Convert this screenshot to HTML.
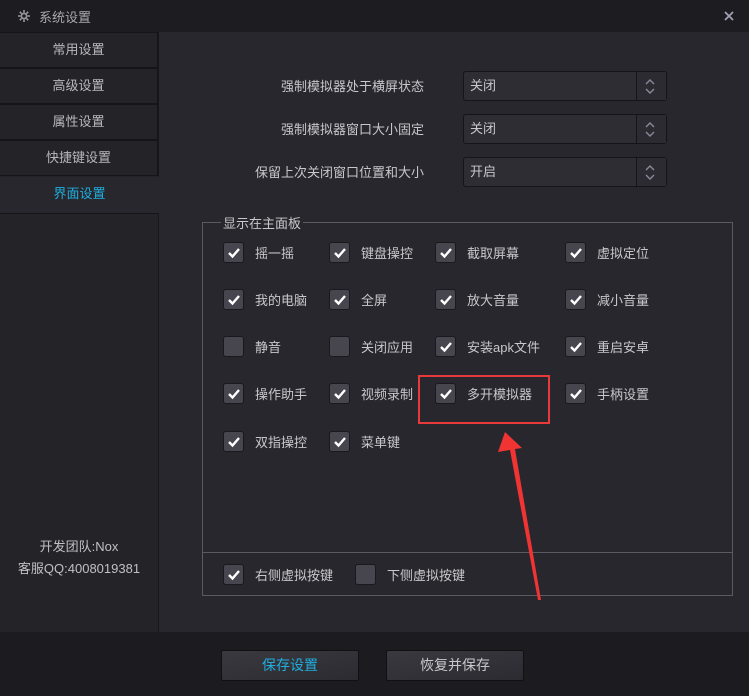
<!DOCTYPE html><html><head><meta charset="utf-8"><style>
*{margin:0;padding:0;box-sizing:border-box}
body{width:749px;height:696px;background:#28272d;font-family:"Liberation Sans","Noto Sans CJK SC",sans-serif;font-size:13px;color:#c8c8cc;position:relative;overflow:hidden}
.a{position:absolute}
.title{left:0;top:0;width:749px;height:32px;background:#1d1c21}
.side{left:0;top:32px;width:159px;height:600px;background:#242328}
.it{left:0;width:158px;height:36px;border:1px solid #151418;border-left:none;background:#242328;text-align:center;line-height:34px;color:#b8b8bc}
.bot{left:0;top:632px;width:749px;height:64px;background:#1c1b20}
.btn{top:650px;width:138px;height:31px;border:1px solid #111;border-radius:2px;background:linear-gradient(170deg,#3a393f,#2c2b31);text-align:center;line-height:29px;font-size:14px}
.sel{left:463px;width:204px;height:30px;border:1px solid #151418;border-radius:3px;background:#2e2d33;line-height:28px;padding-left:6px}
.sel i{position:absolute;right:0;top:0;width:30px;height:28px;border-left:1px solid #151418;background:#2c2b31}
.lab{width:250px;text-align:right;left:174px}
.cb{width:21px;height:21px;background:#47464e;border:1px solid #1a191d;border-radius:3px}
.cb svg{position:absolute;left:3px;top:4px}
.t{font-size:13px}
</style></head><body>
<div class="a title"></div>
<svg class="a" style="left:18px;top:10px" width="12" height="12"><g stroke="#9a9aa0" stroke-width="1.6" fill="none"><circle cx="6" cy="6" r="2.6"/><path d="M6 0v2.5M6 9.5V12M0 6h2.5M9.5 6H12M1.8 1.8l1.8 1.8M8.4 8.4l1.8 1.8M1.8 10.2l1.8-1.8M8.4 3.6l1.8-1.8"/></g></svg>
<div class="a" style="left:39px;top:7px;color:#a8a8ae">系统设置</div>
<svg class="a" style="left:724px;top:11px" width="10" height="10"><path d="M1 1l8 8M9 1L1 9" stroke="#a0a0b0" stroke-width="1.8"/></svg>
<div class="a side"></div>
<div class="a" style="left:158px;top:32px;width:1px;height:600px;background:#18171b"></div>
<div class="a it" style="top:32px">常用设置</div>
<div class="a it" style="top:68px">高级设置</div>
<div class="a it" style="top:104px">属性设置</div>
<div class="a it" style="top:140px">快捷键设置</div>
<div class="a it" style="top:177px;border:none;background:#28272d;color:#1eaee0;width:159px">界面设置</div>
<div class="a" style="left:0;top:213px;width:158px;height:1px;background:#151418"></div>
<div class="a" style="left:0;top:536px;width:158px;text-align:center;color:#c0c0c4">开发团队:Nox</div>
<div class="a" style="left:0;top:558px;width:158px;text-align:center;color:#c0c0c4">客服QQ:4008019381</div>

<div class="a lab" style="top:76px">强制模拟器处于横屏状态</div>
<div class="a lab" style="top:119px">强制模拟器窗口大小固定</div>
<div class="a lab" style="top:162px">保留上次关闭窗口位置和大小</div>
<div class="a sel" style="top:71px">关闭<i></i></div>
<div class="a sel" style="top:114px">关闭<i></i></div>
<div class="a sel" style="top:157px">开启<i></i></div>
<svg class="a" style="left:643px;top:71px" width="16" height="116"><g fill="none" stroke="#8a8a98" stroke-width="1.4"><path d="M3 13l4-4 4 4M3 18l4 4 4-4"/><path d="M3 56l4-4 4 4M3 61l4 4 4-4"/><path d="M3 99l4-4 4 4M3 104l4 4 4-4"/></g></svg>

<div class="a" style="left:202px;top:222px;width:531px;height:374px;border:1px solid #5a5a60"></div>
<div class="a" style="left:202px;top:552px;width:531px;height:1px;background:#5a5a60"></div>
<div class="a" style="left:221px;top:213px;background:#28272d;padding:0 2px">显示在主面板</div>
<div id="g"></div>
<div class="a" style="left:418px;top:375px;width:132px;height:49px;border:2px solid #e83a3a"></div>
<svg class="a" style="left:0;top:0" width="749" height="696"><path d="M505 432 L522 448 L515 449 L541 600 L538 600 L510 450 L498 452 Z" fill="#f03434"/></svg>

<div class="a bot"></div>
<div class="a btn" style="left:221px;color:#1eaee0">保存设置</div>
<div class="a btn" style="left:386px">恢复并保存</div>
<script>
var cols=[[223,255],[329,361],[435,467],[565,597]];
var rows=[[242,"摇一摇","键盘操控","截取屏幕","虚拟定位"],[289,"我的电脑","全屏","放大音量","减小音量"],[336,"静音","关闭应用","安装apk文件","重启安卓"],[383,"操作助手","视频录制","多开模拟器","手柄设置"],[431,"双指操控","菜单键"]];
var off={"静音":1,"关闭应用":1};
var h="";
function cb(x,y,on){h+='<div class="a cb" style="left:'+x+'px;top:'+y+'px">'+(on?'<svg width="14" height="12"><path d="M2 6l3.5 3.5L12 2" fill="none" stroke="#fff" stroke-width="2.4"/></svg>':'')+'</div>';}
rows.forEach(function(r){for(var i=1;i<r.length;i++){var c=cols[i-1];cb(c[0],r[0],!off[r[i]]);h+='<div class="a t" style="left:'+c[1]+'px;top:'+(r[0]+1)+'px">'+r[i]+'</div>';}});
cb(223,564,1);h+='<div class="a t" style="left:255px;top:565px">右侧虚拟按键</div>';
cb(355,564,0);h+='<div class="a t" style="left:387px;top:565px">下侧虚拟按键</div>';
document.getElementById("g").outerHTML=h;
</script>
</body></html>
